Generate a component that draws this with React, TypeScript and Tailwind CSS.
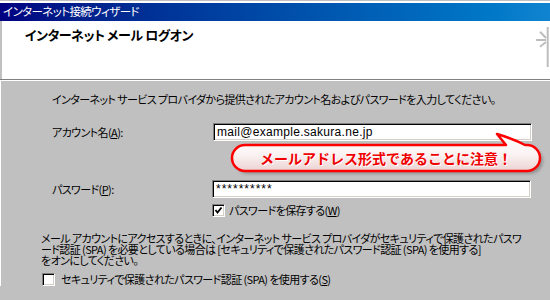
import React from 'react';

function Checkbox({ checked }: { checked?: boolean }) {
  return (
    <span className="flex h-[13px] w-[13px] shrink-0 items-center justify-center border border-t-[#808080] border-l-[#808080] border-r-white border-b-white bg-white shadow-[inset_1px_1px_0_#000,inset_-1px_-1px_0_#d4d0c8]">
      {checked && (
        <svg width="9" height="9" viewBox="0 0 9 9">
          <polyline points="1.5,4 3.5,6.5 7.5,1.5" fill="none" stroke="#000" strokeWidth="1.8" />
        </svg>
      )}
    </span>
  );
}

function Field({ value, mono }: { value: string; mono?: boolean }) {
  return (
    <div
      className={
        'flex h-[18px] w-[319px] items-center border border-t-[#808080] border-l-[#808080] border-r-white border-b-white bg-white pl-[3px] shadow-[inset_1px_1px_0_#000,inset_-1px_-1px_0_#d4d0c8] font-["Liberation_Sans",sans-serif] text-[12px] leading-none ' +
        (mono ? 'tracking-[1px]' : 'tracking-[0.3px]')
      }
    >
      {value}
    </div>
  );
}

export default function App() {
  return (
    <div className="relative h-[300px] w-[550px] overflow-hidden bg-[#c0c0c0] font-['Noto_Sans_CJK_JP',sans-serif] text-[11px] tracking-[-0.6px] text-black [font-feature-settings:'palt']">
      <div className="h-[3px] border-t border-[#c0c0c0] bg-white" />
      <div className="flex h-[18px] items-center bg-linear-to-r from-[#000080] to-[#1084d0] pl-[3px] text-[11.5px] leading-none tracking-[-0.6px] text-white">
        インターネット接続ウィザード
      </div>

      <div className="flex h-[58px] justify-between border-l-2 border-[#c0c0c0] bg-white">
        <h1 className="pl-[23px] pt-[6px] text-[13px] font-bold leading-[16px] tracking-[-0.45px]">
          インターネット メール ログオン
        </h1>
        <svg width="16" height="42" viewBox="0 0 16 42" className="mt-[5px]">
          <g stroke="#bdbdbd" strokeWidth="2" fill="none">
            <line x1="13.7" y1="1" x2="13.7" y2="41" />
            <line x1="6" y1="5.7" x2="12" y2="12" />
            <line x1="2" y1="14" x2="12" y2="14" />
            <line x1="6" y1="20.7" x2="12" y2="16" />
          </g>
        </svg>
      </div>
      <div className="border-t border-b border-t-[#808080] border-b-white" />

      <div className="border-l border-white pl-[39px]">
        <p className="whitespace-nowrap pl-[12px] pt-[10px] leading-[16px]">
          インターネット サービス プロバイダから提供されたアカウント名およびパスワードを入力してください。
        </p>

        <div className="mt-[16px] flex items-center pl-[12px]">
          <span className="w-[161px] leading-[16px]">
            アカウント名(<span className="underline">A</span>):
          </span>
          <Field value="mail@example.sakura.ne.jp" />
        </div>

        <div className="mt-[39px] flex items-center pl-[12px]">
          <span className="w-[160px] leading-[16px]">
            パスワード(<span className="underline">P</span>):
          </span>
          <Field value="**********" mono />
        </div>

        <div className="mt-[6px] flex items-center gap-[4px] pl-[172px]">
          <Checkbox checked />
          <span className="leading-[13px]">
            パスワードを保存する(<span className="underline">W</span>)
          </span>
        </div>

        <p className="mt-[16px] whitespace-nowrap pl-[1px] leading-[11px]">
          メール アカウントにアクセスするときに、インターネット サービス プロバイダがセキュリティで保護されたパスワ
          <br />
          ード認証 (SPA) を必要としている場合は [セキュリティで保護されたパスワード認証 (SPA) を使用する]
          <br />
          をオンにしてください。
        </p>

        <div className="mt-[7px] flex items-center gap-[6px] pl-[2px]">
          <Checkbox />
          <span className="leading-[13px]">
            セキュリティで保護されたパスワード認証 (SPA) を使用する(<span className="underline">S</span>)
          </span>
        </div>
      </div>

      <div className="absolute left-[225px] top-[128px] h-[52px] w-[325px]">
        <svg width="325" height="52" viewBox="0 0 325 52" className="absolute inset-0">
          <defs>
            <linearGradient id="bub" x1="0" y1="0" x2="0" y2="1">
              <stop offset="0" stopColor="#ffffff" />
              <stop offset="0.55" stopColor="#fbf3f3" />
              <stop offset="1" stopColor="#ecd2d2" />
            </linearGradient>
            <filter id="blur" x="-10%" y="-30%" width="120%" height="160%">
              <feGaussianBlur stdDeviation="1.5" />
            </filter>
          </defs>
          <path
            d="M20 17 H281 L272 6 Q289 11 300 17 H302 A13 13 0 0 1 302 43 H20 A13 13 0 0 1 20 17 Z"
            fill="#6f6f6f"
            opacity="0.55"
            transform="translate(3 3)"
            filter="url(#blur)"
          />
          <path
            d="M20 17 H281 L272 6 Q289 11 300 17 H302 A13 13 0 0 1 302 43 H20 A13 13 0 0 1 20 17 Z"
            fill="url(#bub)"
            stroke="#ff0000"
            strokeWidth="2.5"
            strokeLinejoin="round"
          />
        </svg>
        <div className="absolute left-[7px] top-[17px] flex h-[26px] w-[308px] items-center justify-center text-[14px] font-bold leading-none tracking-normal text-[#f00000] [font-feature-settings:normal] [text-shadow:1px_1px_0_#ffffff]">
          メールアドレス形式であることに注意！
        </div>
      </div>
    </div>
  );
}
